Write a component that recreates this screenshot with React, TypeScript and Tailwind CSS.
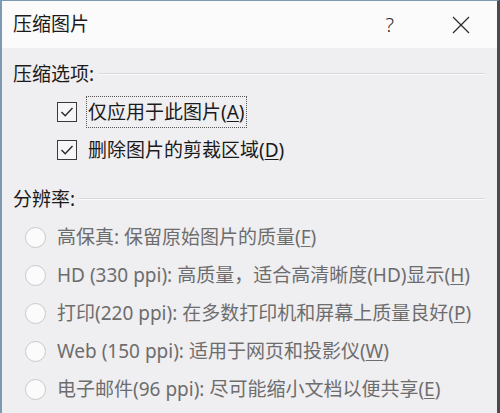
import React from "react";

const font = { fontFamily: '"Noto Sans", "Noto Sans CJK SC", sans-serif' };

function Check() {
  return (
    <div className="w-[20px] h-[20px] border-[1.5px] border-[#3a3a3a] bg-[#f6f6f8] flex items-center justify-center shrink-0">
      <svg width="14" height="12" viewBox="0 0 14 12">
        <polyline points="1.5,6 5.2,9.8 12.5,2" fill="none" stroke="#2a2a2a" strokeWidth="1.4" />
      </svg>
    </div>
  );
}

function Radio() {
  return <div className="w-[21px] h-[21px] rounded-full border border-[#c9c9cc] bg-[#fbfbfc] shrink-0" />;
}

function GroupLabel({ text, extra }: { text: string; extra?: string }) {
  return (
    <div className={"h-[38px] flex items-center pr-[12px] " + (extra ?? "")}>
      <span className="text-[19px] text-[#1b1b1b] leading-none">{text}</span>
      <div className="flex-1 ml-[4px] flex flex-col">
        <div className="h-px bg-[#d9d8dc]" />
        <div className="h-px bg-[#fbfbfc]" />
      </div>
    </div>
  );
}

function RadioRow({ pre, u, post }: { pre: string; u: string; post: string }) {
  return (
    <div className="h-[38px] flex items-center pl-[12px] gap-[11px]">
      <Radio />
      <span className="text-[19px] text-[#6d6d6d] leading-none whitespace-nowrap">
        {pre}
        <span className="underline underline-offset-2">{u}</span>
        {post}
      </span>
    </div>
  );
}

export default function App() {
  return (
    <div
      style={font}
      className="w-[500px] h-[413px] overflow-hidden flex flex-col bg-[#efeef1] border-l-2 border-l-[#7d9ab3] border-t border-t-[#7d9ab3] border-r-[3px] border-r-[#4b4b4d]"
    >
      <div className="h-[47px] shrink-0 bg-[#fbfbfc] flex items-center pl-[11px] pr-[27px]">
        <span className="text-[19px] text-[#1b1b1b] leading-none flex-1">压缩图片</span>
        <span className="text-[20px] text-[#2b2b2b] leading-none font-light mr-[58px]">?</span>
        <svg width="18" height="18" viewBox="0 0 18 18">
          <path d="M1 1 L17 17 M17 1 L1 17" stroke="#2b2b2b" strokeWidth="1.2" fill="none" />
        </svg>
      </div>
      <div className="flex flex-col pl-[11px] pt-[7px]">
        <GroupLabel text="压缩选项:" />
        <div className="h-[38px] flex items-center pl-[44px]">
          <Check />
          <div className="ml-[9px] border border-dotted border-[#555] px-[1px] h-[32px] flex items-center">
            <span className="text-[19px] text-[#1b1b1b] leading-none whitespace-nowrap">
              仅应用于此图片(<span className="underline underline-offset-2">A</span>)
            </span>
          </div>
        </div>
        <div className="h-[38px] flex items-center pl-[44px]">
          <Check />
          <span className="ml-[11px] text-[19px] text-[#1b1b1b] leading-none whitespace-nowrap">
            删除图片的剪裁区域(<span className="underline underline-offset-2">D</span>)
          </span>
        </div>
        <GroupLabel text="分辨率:" extra="mt-[11px]" />
        <RadioRow pre="高保真: 保留原始图片的质量(" u="F" post=")" />
        <RadioRow pre="HD (330 ppi): 高质量，适合高清晰度(HD)显示(" u="H" post=")" />
        <RadioRow pre="打印(220 ppi): 在多数打印机和屏幕上质量良好(" u="P" post=")" />
        <RadioRow pre="Web (150 ppi): 适用于网页和投影仪(" u="W" post=")" />
        <RadioRow pre="电子邮件(96 ppi): 尽可能缩小文档以便共享(" u="E" post=")" />
      </div>
    </div>
  );
}
